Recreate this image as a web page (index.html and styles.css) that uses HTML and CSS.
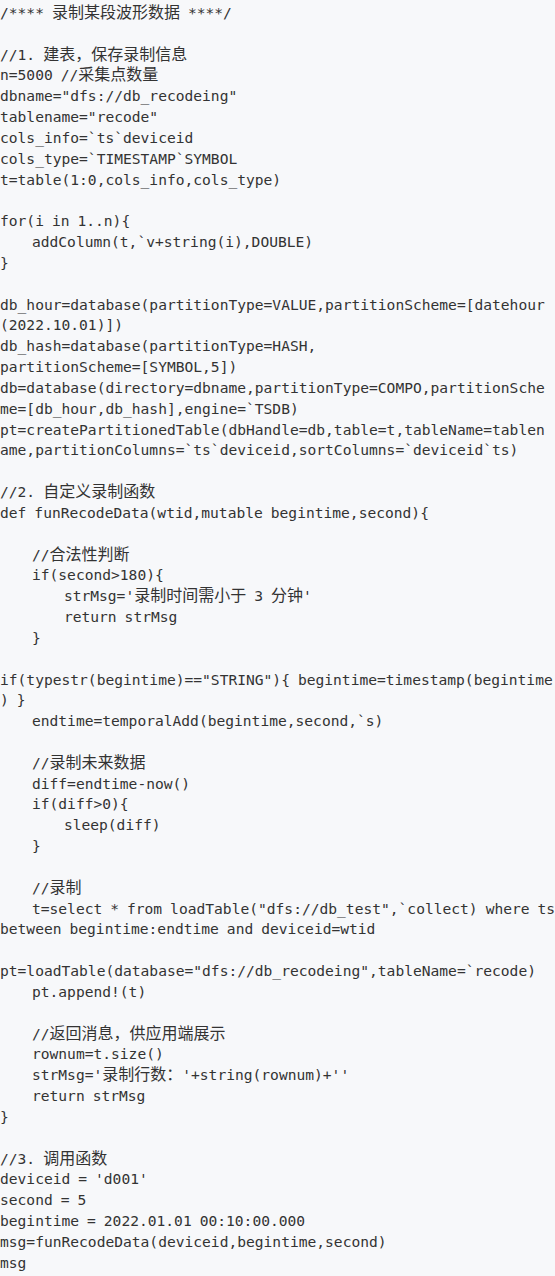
FILE: index.html
```html
<!DOCTYPE html>
<html lang="zh-CN">
<head>
    <meta charset="UTF-8">
    <title>录制某段波形数据</title>
    <link rel="stylesheet" href="styles.css">
</head>
<body>
<pre class="code">/**** <span class="zh">录制某段波形数据</span> ****/

//1. <span class="zh">建表，保存录制信息</span>
n=5000 //<span class="zh">采集点数量</span>
dbname="dfs://db_recodeing"
tablename="recode"
cols_info=`ts`deviceid
cols_type=`TIMESTAMP`SYMBOL
t=table(1:0,cols_info,cols_type)

for(i in 1..n){
    addColumn(t,`v+string(i),DOUBLE)
}

db_hour=database(partitionType=VALUE,partitionScheme=[datehour
(2022.10.01)])
db_hash=database(partitionType=HASH,
partitionScheme=[SYMBOL,5])
db=database(directory=dbname,partitionType=COMPO,partitionSche
me=[db_hour,db_hash],engine=`TSDB)
pt=createPartitionedTable(dbHandle=db,table=t,tableName=tablen
ame,partitionColumns=`ts`deviceid,sortColumns=`deviceid`ts)

//2. <span class="zh">自定义录制函数</span>
def funRecodeData(wtid,mutable begintime,second){

    //<span class="zh">合法性判断</span>
    if(second&gt;180){
        strMsg='<span class="zh">录制时间需小于</span> 3 <span class="zh">分钟</span>'
        return strMsg
    }

if(typestr(begintime)=="STRING"){ begintime=timestamp(begintime
) }
    endtime=temporalAdd(begintime,second,`s)

    //<span class="zh">录制未来数据</span>
    diff=endtime-now()
    if(diff&gt;0){
        sleep(diff)
    }

    //<span class="zh">录制</span>
    t=select * from loadTable("dfs://db_test",`collect) where ts
between begintime:endtime and deviceid=wtid

pt=loadTable(database="dfs://db_recodeing",tableName=`recode)
    pt.append!(t)

    //<span class="zh">返回消息，供应用端展示</span>
    rownum=t.size()
    strMsg='<span class="zh">录制行数：</span>'+string(rownum)+''
    return strMsg
}

//3. <span class="zh">调用函数</span>
deviceid = 'd001'
second = 5
begintime = 2022.01.01 00:10:00.000
msg=funRecodeData(deviceid,begintime,second)
msg</pre>
</body>
</html>
```

FILE: styles.css
```css
html {
    background-color: #f7f8fa;
}

body {
    margin: 0;
    padding: 0;
    background-color: #f7f8fa;
}

.code {
    margin: 0;
    padding: 3px 0 0 0;
    font-family: "DejaVu Sans Mono", "Noto Sans CJK SC", monospace;
    font-size: 14.6px;
    line-height: 20.83px;
    word-spacing: -0.8px;
    color: #333;
    white-space: pre;
    overflow: hidden;
}

.zh {
    font-family: "Noto Sans CJK SC", sans-serif;
    font-size: 16px;
    line-height: 16px;
    word-spacing: 0;
}
```
